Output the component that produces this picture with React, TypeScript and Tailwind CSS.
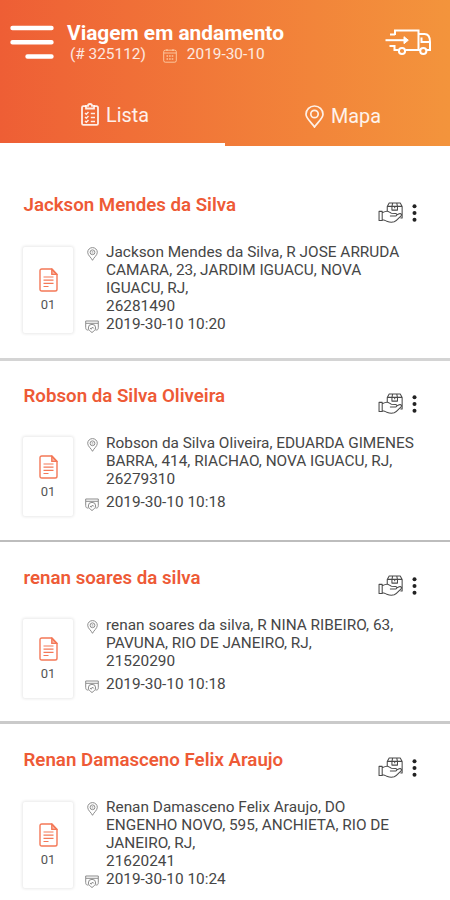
import React from "react";

type Stop = {
  name: string;
  lines: string[];
  date: string;
  layout: { row: string; card: string; date: string };
};

const stops: Stop[] = [
  {
    name: "Jackson Mendes da Silva",
    lines: ["Jackson Mendes da Silva, R JOSE ARRUDA", "CAMARA, 23, JARDIM IGUACU, NOVA", "IGUACU, RJ,", "26281490"],
    date: "2019-30-10 10:20",
    layout: { row: "h-[215px] border-b-[3px] border-[#d4d4d4] pt-12", card: "mt-1 h-[86px]", date: "" },
  },
  {
    name: "Robson da Silva Oliveira",
    lines: ["Robson da Silva Oliveira, EDUARDA GIMENES", "BARRA, 414, RIACHAO, NOVA IGUACU, RJ,", "26279310"],
    date: "2019-30-10 10:18",
    layout: { row: "h-[181px] border-b-2 border-[#bdbdbd] pt-6", card: "mt-[3px] h-[79px]", date: "mt-[5px]" },
  },
  {
    name: "renan soares da silva",
    lines: ["renan soares da silva, R NINA RIBEIRO, 63,", "PAVUNA, RIO DE JANEIRO, RJ,", "21520290"],
    date: "2019-30-10 10:18",
    layout: { row: "h-[182px] border-b-[3px] border-[#cacaca] pt-[25px]", card: "mt-[3px] h-[79px]", date: "mt-[5px]" },
  },
  {
    name: "Renan Damasceno Felix Araujo",
    lines: ["Renan Damasceno Felix Araujo, DO", "ENGENHO NOVO, 595, ANCHIETA, RIO DE", "JANEIRO, RJ,", "21620241"],
    date: "2019-30-10 10:24",
    layout: { row: "h-[176px] pt-[25px]", card: "mt-1 h-[86px]", date: "" },
  },
];

function MenuIcon() {
  return (
    <svg className="h-[34px] w-[45px]" viewBox="0 0 45 34" stroke="#fff" strokeWidth="4.4" strokeLinecap="round">
      <path d="M3.5 3h39M3.5 17.3h39M18.5 31.5h24" />
    </svg>
  );
}

function TruckIcon() {
  return (
    <svg className="h-7 w-[47px]" viewBox="0 0 47 28" fill="none" stroke="#fff" strokeWidth="2">
      <path d="M10 7V2.5h23.5V22H20.5M13.5 22h-4v-4H4.5M10 6.5H5M33.5 6h6c4 0 5.5 4 5.5 8v8h-3.5M35 22h-1.5M36.5 9.5v4.5H45" />
      <path d="M0.5 12.2h19" />
      <path d="M19 8.7l4.3 3.5-4.3 3.5z" fill="#fff" strokeWidth="1" />
      <circle cx="17" cy="23" r="3.1" />
      <circle cx="38.3" cy="23" r="3.1" />
    </svg>
  );
}

function ChecklistIcon() {
  return (
    <svg className="h-[23px] w-[18px]" viewBox="0 0 18 23" fill="none" stroke="#fff" strokeOpacity=".88" strokeWidth="1.8">
      <path d="M5 3.2H2.4c-.9 0-1.4.5-1.4 1.4v15.8c0 .9.5 1.4 1.4 1.4h13.2c.9 0 1.4-.5 1.4-1.4V4.6c0-.9-.5-1.4-1.4-1.4H13" />
      <path d="M5 5.5V2.8h2C7 .4 11 .4 11 2.8h2v2.7z" />
      <path d="M4 10l1.3 1.2L7.5 9M9.8 10.5H14M4 14l1.3 1.2L7.5 13M9.8 14.5H14M4 18l1.3 1.2L7.5 17M9.8 18.5H14" strokeWidth="1.5" />
    </svg>
  );
}

function MapPinIcon() {
  return (
    <svg className="h-[23px] w-[19px]" viewBox="0 0 19 23" fill="none" stroke="#fff" strokeOpacity=".88" strokeWidth="1.7">
      <path d="M9.5 22C6.8 17.8 1 13.5 1 9.3a8.5 8.3 0 0 1 17 0c0 4.2-5.8 8.5-8.5 12.7z" />
      <circle cx="9.5" cy="9" r="3.7" />
    </svg>
  );
}

function CalendarIcon() {
  return (
    <svg className="h-3.5 w-3.5" viewBox="0 0 14 14" fill="none" stroke="#ffe0bd" strokeOpacity=".75">
      <rect x=".7" y="1.2" width="12.6" height="12" rx="1.6" />
      <path d="M1 4h12M4 0v2M10 0v2" />
      <path d="M3.5 7h7M3.5 10h7" strokeWidth="1.7" strokeDasharray="1.6 1" />
    </svg>
  );
}

function DeliveryIcon() {
  return (
    <svg className="h-[21px] w-[25px]" viewBox="0 0 26 22" fill="none" stroke="#4a4a4a" strokeWidth="1.1" strokeLinejoin="round">
      <path d="M9.6 9.4V4.6L11.6 1h11.6l2 3.6v12.2h-1.8M9.6 4.6h15.6M15.3 1l-.8 3.6v3.9h5.8V4.6L19.5 1M17.4 4.6v2" />
      <path d="M1 9.8h3.3v9.6H1zM4.3 11.2c1.8-.9 3.4-1.7 5.2-1.6 1.8.1 2.8 1.8 4.5 2.1l4.2.3c1.9.2 2 2.4.2 2.6l-6 .1M19.3 13.7l2.8-1.3c2-.8 3.2.9 1.8 2.3-2.2 2.3-4.2 4.9-7 6-2.6.9-5.4.4-7.8-.6-1.6-.7-3.1-1.5-4.8-1.6" />
    </svg>
  );
}

function DocumentIcon() {
  return (
    <svg className="h-6 w-[19px]" viewBox="0 0 19 24" fill="none" stroke="#f47857" strokeWidth="1.4" strokeLinejoin="round">
      <path d="M2.8 1h10L18 6.4v14.8c0 1.1-.6 1.8-1.8 1.8H2.8C1.6 23 1 22.3 1 21.2V2.8C1 1.6 1.6 1 2.8 1z" />
      <path d="M12.8 1v5.4H18z" fill="#f47857" fillOpacity=".5" />
      <path d="M4.5 9h10M4.5 12.2h10M4.5 15.4h10M4.5 18.5h5" strokeWidth="1.2" />
    </svg>
  );
}

function PlaceIcon() {
  return (
    <svg className="h-3.5 w-[11px]" viewBox="0 0 11 14" fill="none" stroke="#8c8c8c">
      <path d="M5.5 13.3C4.2 10.4.7 8.4.7 5.3a4.8 4.7 0 0 1 9.6 0c0 3.1-3.5 5.1-4.8 8z" />
      <circle cx="5.5" cy="5.3" r="2.4" />
      <path d="M4.7 4.7h1.6M4.7 6h1.6" strokeWidth=".7" />
    </svg>
  );
}

function DeliveryDateIcon() {
  return (
    <svg className="h-[13px] w-[14px]" viewBox="0 0 14 13" fill="none" stroke="#858585" strokeWidth=".95">
      <path d="M3.5 10H2.4C1.2 10 .7 8.8.7 7.5V1h12.6v6.5c0 1.5-.5 2.5-1.7 2.5h-1.1M1 3.3h12" />
      <path d="M3.3 8a3.7 3.7 0 0 1 7.4 0c0 2.1-2.2 3.3-3.7 4.5C5.5 11.3 3.3 10.1 3.3 8zM5 8l1.3 1.2L7.5 7l1.3 1.5" />
    </svg>
  );
}

function StopRow({ stop }: { stop: Stop }) {
  return (
    <section className={`pl-[23px] ${stop.layout.row}`}>
      <div className="flex h-[22px] items-start">
        <h2 className="flex-1 pl-[0.5px] text-[18.7px] leading-[22px] font-semibold whitespace-nowrap text-[#ee5a36]">{stop.name}</h2>
        <div className="mr-[33px] flex items-center gap-[9px] pt-2">
          <DeliveryIcon />
          <svg className="h-[18px] w-[5px]" viewBox="0 0 5 18" fill="#222">
            <circle cx="2.5" cy="2.2" r="2" />
            <circle cx="2.5" cy="9" r="2" />
            <circle cx="2.5" cy="15.8" r="2" />
          </svg>
        </div>
      </div>
      <div className="mt-[27px] flex items-start">
        <div className={`flex w-[50px] shrink-0 flex-col items-center justify-center rounded-[2px] bg-white pt-[1px] shadow-[0_0_3px_1px_rgba(0,0,0,0.09)] ${stop.layout.card}`}>
          <DocumentIcon />
          <span className="mt-[5px] text-[13px] leading-4 text-[#555]">01</span>
        </div>
        <div className="ml-[12px] text-[15.38px] leading-[18px] whitespace-nowrap text-[#464646]">
          <div className="flex">
            <div className="flex w-[21px] shrink-0 pt-1 pl-[2px]">
              <PlaceIcon />
            </div>
            <div>
              {stop.lines.map((line) => (
                <div key={line}>{line}</div>
              ))}
            </div>
          </div>
          <div className={`flex ${stop.layout.date}`}>
            <div className="flex w-[21px] shrink-0 pt-[5px]">
              <DeliveryDateIcon />
            </div>
            <div>{stop.date}</div>
          </div>
        </div>
      </div>
    </section>
  );
}

export default function App() {
  return (
    <div className="h-[900px] w-[450px] overflow-hidden bg-white font-[Roboto,sans-serif]">
      <header className="h-[146px] bg-linear-to-r from-[#ee5e35] to-[#f3943c] text-white">
        <div className="flex h-[88px] items-start">
          <div className="mt-[25px] ml-[9px]">
            <MenuIcon />
          </div>
          <div className="mt-[21px] ml-[13px] flex-1 whitespace-nowrap">
            <h1 className="text-[20.9px] leading-6 font-bold">Viagem em andamento</h1>
            <div className="flex h-[18px] items-center pl-[3px] text-[15.4px] leading-[18px] text-white/85">
              <span>(# 325112)</span>
              <span className="mt-1 ml-[17px]">
                <CalendarIcon />
              </span>
              <span className="ml-[10px]">2019-30-10</span>
            </div>
          </div>
          <div className="mt-[28px] mr-[18px]">
            <TruckIcon />
          </div>
        </div>
        <nav className="flex h-[58px] text-[19.8px] leading-6 text-white/90">
          <div className="flex w-[225px] items-start gap-[7px] border-b-[3px] border-white pt-[15px] pl-[81px]">
            <ChecklistIcon />
            <span className="pt-px">Lista</span>
          </div>
          <div className="flex w-[225px] items-start gap-[7px] pt-[17px] pl-[80px]">
            <MapPinIcon />
            <span>Mapa</span>
          </div>
        </nav>
      </header>
      <main>
        {stops.map((stop) => (
          <StopRow key={stop.name} stop={stop} />
        ))}
      </main>
    </div>
  );
}
